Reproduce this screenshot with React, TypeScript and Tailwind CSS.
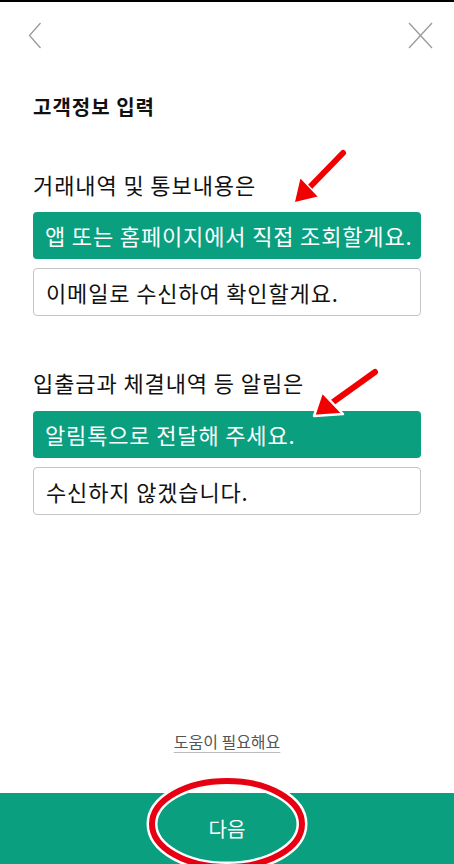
import React from "react";

const GREEN = "bg-[#0a9f7f]";

const Option = ({ label, selected }: { label: string; selected?: boolean }) => (
  <div
    className={
      selected
        ? `${GREEN} h-[47px] rounded-[4px] flex items-center pl-[12px] text-white text-[22px] tracking-[0.85px]`
        : "h-[48px] rounded-[4px] border border-[#c4c4c4] bg-white flex items-center pl-[12px] text-[#111] text-[22px] tracking-[0.85px]"
    }
  >
    {label}
  </div>
);

export default function App() {
  return (
    <div
      className="relative w-[454px] h-[864px] bg-white flex flex-col overflow-hidden"
      style={{ fontFamily: '"Noto Sans CJK KR", "Noto Sans", sans-serif' }}
    >
      <div className="h-[2px] bg-black" />

      <div className="flex justify-between items-start h-[52px] pl-[28px] pr-[21px] pt-[20px]">
        <svg width="14" height="27" viewBox="0 0 14 27" fill="none">
          <path d="M12.5 1 L1.5 13.5 L12.5 26" stroke="#9a9a9a" strokeWidth="1.3" />
        </svg>
        <svg width="25" height="27" viewBox="0 0 25 27" fill="none">
          <path d="M1 1 L24 26 M24 1 L1 26" stroke="#9a9a9a" strokeWidth="1.3" />
        </svg>
      </div>

      <div className="px-[33px]">
        <h1 className="mt-[39px] text-[20px] leading-[28px] font-bold text-[#111] tracking-[1px]">고객정보 입력</h1>

        <p className="mt-[47px] text-[22px] leading-[32px] text-[#111] tracking-[0.9px]">거래내역 및 통보내용은</p>
        <div className="mt-[12px] flex flex-col gap-[9px]">
          <Option label="앱 또는 홈페이지에서 직접 조회할게요." selected />
          <Option label="이메일로 수신하여 확인할게요." />
        </div>

        <p className="mt-[50px] text-[22px] leading-[32px] text-[#111] tracking-[0.9px]">입출금과 체결내역 등 알림은</p>
        <div className="mt-[13px] flex flex-col gap-[9px]">
          <Option label="알림톡으로 전달해 주세요." selected />
          <Option label="수신하지 않겠습니다." />
        </div>
      </div>

      <div className="flex-1" />

      <div className="flex justify-center mb-[40px]">
        <span className="text-[16px] leading-[24px] text-[#555] underline underline-offset-[4px] decoration-[#bbb]">
          도움이 필요해요
        </span>
      </div>

      <div className={`${GREEN} h-[71px] flex items-center justify-center text-white text-[20px]`}>다음</div>

      <svg className="absolute inset-0 pointer-events-none" width="454" height="864" viewBox="0 0 454 864">
        <line x1="343" y1="153" x2="306" y2="191" stroke="#f20000" strokeWidth="6" strokeLinecap="round" />
        <polygon points="294,203 300,177 319,197" fill="#f20000" stroke="#fff" strokeWidth="1.5" />
        <line x1="375" y1="372" x2="329" y2="405" stroke="#f20000" strokeWidth="6" strokeLinecap="round" />
        <polygon points="314,416 322,392 343,414" fill="#f20000" stroke="#fff" strokeWidth="2.5" strokeLinejoin="round" />
        <ellipse cx="227" cy="824" rx="75" ry="43" fill="none" stroke="#fff" strokeWidth="11" />
        <ellipse cx="227" cy="824" rx="75" ry="43" fill="none" stroke="#e60012" strokeWidth="6" />
      </svg>
    </div>
  );
}
